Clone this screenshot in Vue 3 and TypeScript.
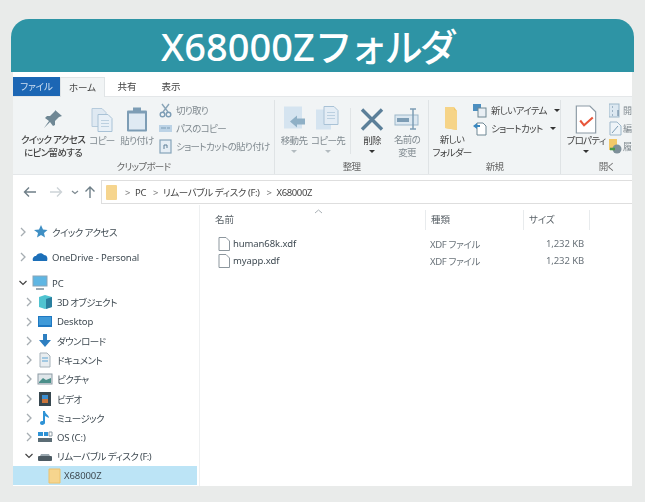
<script setup lang="ts">
type TreeRow = { label: string; icon: string; depth: number; open?: boolean; noArrow?: boolean; selected?: boolean; gap?: boolean }

const tabs = ['ホーム', '共有', '表示']

const tree: TreeRow[] = [
  { label: 'クイック アクセス', icon: 'star', depth: 0, gap: true },
  { label: 'OneDrive - Personal', icon: 'cloud', depth: 0, gap: true },
  { label: 'PC', icon: 'pc', depth: 0, open: true },
  { label: '3D オブジェクト', icon: 'cube', depth: 1 },
  { label: 'Desktop', icon: 'desktop', depth: 1 },
  { label: 'ダウンロード', icon: 'download', depth: 1 },
  { label: 'ドキュメント', icon: 'doc', depth: 1 },
  { label: 'ピクチャ', icon: 'picture', depth: 1 },
  { label: 'ビデオ', icon: 'video', depth: 1 },
  { label: 'ミュージック', icon: 'music', depth: 1 },
  { label: 'OS (C:)', icon: 'os', depth: 1 },
  { label: 'リムーバブル ディスク (F:)', icon: 'drive', depth: 1, open: true },
  { label: 'X68000Z', icon: 'folder', depth: 2, noArrow: true, selected: true },
]

const files = [
  { name: 'human68k.xdf', type: 'XDF ファイル', size: '1,232 KB' },
  { name: 'myapp.xdf', type: 'XDF ファイル', size: '1,232 KB' },
]

const isJapanese = (text: string): boolean => /[^\x00-\x7f]/.test(text)
</script>

<template>
  <div class="page">
    <div class="card">
      <h1 class="title">X68000Z<span class="title-kana">フォルダ</span></h1>
      <div class="explorer">
        <div class="tabs">
          <div class="tab tab-file">ファイル</div>
          <div v-for="(t, i) in tabs" :key="t" class="tab" :class="{ 'tab-active': i === 0 }">{{ t }}</div>
        </div>

        <div class="ribbon">
          <section class="group group-clip">
            <div class="group-body">
              <div class="big big-pin">
                <svg width="26" height="26" viewBox="0 0 26 26"><path d="M15 4l7 6-3 1-4 4 0 4-2 1-3-4-6 6 5-7-4-3 2-2h3l5-5z" fill="#6f8794" /></svg>
                <span>クイック アクセス<br />にピン留めする</span>
              </div>
              <div class="big big-copy off">
                <svg width="26" height="26" viewBox="0 0 26 26"><path d="M3 2h10l4 4v14H3z" fill="#dfe9f2" stroke="#b6cbdc" /><path d="M9 8h10l4 4v13H9z" fill="#e8f0f7" stroke="#a9c2d6" /><path d="M12 14h8M12 17h8M12 20h8" stroke="#bcd0e0" /></svg>
                <span>コピー</span>
              </div>
              <div class="big big-paste off">
                <svg width="26" height="26" viewBox="0 0 26 26"><rect x="3" y="4" width="20" height="21" rx="1" fill="#7d9db5" /><rect x="5" y="7" width="16" height="16" fill="#dfeaf3" /><rect x="9" y="1" width="8" height="5" fill="#7d9db5" /></svg>
                <span>貼り付け</span>
              </div>
              <div class="small-list off">
                <div class="small">
                  <svg width="13" height="15" viewBox="0 0 13 15"><path d="M3 1l6 8M10 1L4 9" stroke="#8aa5b8" stroke-width="1.4" fill="none" /><circle cx="3.5" cy="11.500" r="2.300" fill="none" stroke="#7d9db5" stroke-width="1.400" /><circle cx="9.500" cy="11.500" r="2.300" fill="none" stroke="#7d9db5" stroke-width="1.400" /></svg>
                  <span>切り取り</span>
                </div>
                <div class="small">
                  <svg width="13" height="15" viewBox="0 0 13 15"><rect x="0" y="4" width="13" height="7" fill="#bcd3e6" /><path d="M2 7h5M8 7h3" stroke="#7d9db5" /></svg>
                  <span>パスのコピー</span>
                </div>
                <div class="small">
                  <svg width="13" height="15" viewBox="0 0 13 15"><rect x="1" y="1" width="11" height="13" fill="#e6eef5" stroke="#86a4ba" stroke-width="1.200" /><path d="M5 10V6h3v3" stroke="#5f7f97" fill="none" /></svg>
                  <span>ショートカットの貼り付け</span>
                </div>
              </div>
            </div>
            <div class="group-label">クリップボード</div>
          </section>

          <section class="group group-org">
            <div class="group-body">
              <div class="big big-move off">
                <svg width="26" height="26" viewBox="0 0 26 26"><rect x="3" y="0" width="18" height="22" fill="#d5e4f0" /><path d="M9 15l7-6v3h8v6h-8v3z" fill="#8fb0c6" /></svg>
                <span>移動先</span>
                <i class="caret caret-off"></i>
              </div>
              <div class="big big-copyto off">
                <svg width="26" height="26" viewBox="0 0 26 26"><path d="M1 3h15v20H1z" fill="#d5e4f0" /><path d="M9 0h10l4 4v14H9z" fill="#e4edf5" stroke="#a9c2d6" /><path d="M12 6h8M12 9h8M12 12h8" stroke="#bcd0e0" /></svg>
                <span>コピー先</span>
                <i class="caret caret-off"></i>
              </div>
              <div class="vsep"></div>
              <div class="big big-del">
                <svg width="24" height="24" viewBox="0 0 24 24"><path d="M2 2l20 20M22 2L2 22" stroke="#5b7f99" stroke-width="3.400" fill="none" /></svg>
                <span>削除</span>
                <i class="caret"></i>
              </div>
              <div class="big big-rename off">
                <svg width="26" height="26" viewBox="0 0 26 26"><rect x="1" y="9" width="23" height="10" fill="#dce8f1" stroke="#9db7ca" /><rect x="3" y="12" width="12" height="4" fill="#7d9db5" /><path d="M16 3h6M19 3v20M16 23h6" stroke="#7d9db5" stroke-width="1.500" fill="none" /></svg>
                <span>名前の<br />変更</span>
              </div>
            </div>
            <div class="group-label">整理</div>
          </section>

          <section class="group group-new">
            <div class="group-body">
              <div class="big big-folder">
                <svg width="26" height="26" viewBox="0 0 26 26"><path d="M6 1h9l3 4v19l-12-2z" fill="#f2c868" /><path d="M6 1h9v3l3 1v19l-12-2z" fill="#f6d488" /></svg>
                <span>新しい<br />フォルダー</span>
              </div>
              <div class="small-list small-new">
                <div class="small">
                  <svg width="14" height="15" viewBox="0 0 14 15"><rect x="0" y="1" width="8" height="7" fill="#4d8fc0" /><rect x="5" y="5" width="8" height="9" fill="#e9eff4" stroke="#6f8794" /></svg>
                  <span>新しいアイテム</span><i class="caret caret-inline"></i>
                </div>
                <div class="small">
                  <svg width="14" height="15" viewBox="0 0 14 15"><path d="M4 2h6l3 3v9H4z" fill="#fff" stroke="#6f8794" /><path d="M0 5l4-3v2h3v2H4v2z" fill="#3a87bf" /></svg>
                  <span>ショートカット</span><i class="caret caret-inline"></i>
                </div>
              </div>
            </div>
            <div class="group-label">新規</div>
          </section>

          <section class="group group-open">
            <div class="group-body">
              <div class="big big-prop">
                <svg width="26" height="30" viewBox="0 0 26 30"><path d="M3 1h14l6 6v22H3z" fill="#fff" stroke="#8b9aa5" stroke-width="1.200" /><path d="M7 16l4 5 9-8" stroke="#e8563a" stroke-width="2.200" fill="none" /></svg>
                <span>プロパティ</span>
                <i class="caret"></i>
              </div>
              <div class="small-list small-open off">
                <div class="small">
                  <svg width="13" height="15" viewBox="0 0 13 15"><rect x="0" y="1" width="10" height="13" fill="#dce8f1" stroke="#9db7ca" /><path d="M3 4h1M3 8h1M3 12h1M9 7v6" stroke="#5f7f97" /></svg>
                  <span>開</span>
                </div>
                <div class="small">
                  <svg width="13" height="15" viewBox="0 0 13 15"><path d="M1 1h7l4 4v9H1z" fill="#eef4f8" stroke="#9db7ca" /><path d="M3 12l6-7" stroke="#7d9db5" /></svg>
                  <span>編</span>
                </div>
                <div class="small">
                  <svg width="13" height="15" viewBox="0 0 13 15"><rect x="0" y="0" width="8" height="11" fill="#f2c868" /><circle cx="8" cy="10" r="4.500" fill="#7d8f99" /><path d="M1 10h5" stroke="#4c9a47" stroke-width="2.500" /></svg>
                  <span>履</span>
                </div>
              </div>
            </div>
            <div class="group-label">開く</div>
          </section>
        </div>

        <div class="nav">
          <div class="nav-buttons">
            <svg width="14" height="12" viewBox="0 0 14 12"><path d="M13 6H2M6 1.500L1.500 6 6 10.500" stroke="#6f7f88" stroke-width="1.400" fill="none" /></svg>
            <svg width="14" height="12" viewBox="0 0 14 12"><path d="M1 6h11M8 1.500L12.500 6 8 10.500" stroke="#cdd3d7" stroke-width="1.400" fill="none" /></svg>
            <svg class="nav-down" width="8" height="12" viewBox="0 0 8 12"><path d="M1 5l3 2.500L7 5" stroke="#7c888f" stroke-width="1.200" fill="none" /></svg>
            <svg class="nav-up" width="12" height="14" viewBox="0 0 12 14"><path d="M6 13V2M1.500 6.500L6 2l4.500 4.500" stroke="#6f7f88" stroke-width="1.400" fill="none" /></svg>
          </div>
          <div class="address">
            <svg width="12" height="15" viewBox="0 0 12 15"><rect x="0" y="0" width="11" height="15" rx="1" fill="#f6d58e" /></svg>
            <span class="sep">&gt;</span><span>PC</span>
            <span class="sep">&gt;</span><span>リムーバブル ディスク (F:)</span>
            <span class="sep">&gt;</span><span>X68000Z</span>
          </div>
        </div>

        <div class="main">
          <aside class="tree">
            <div
              v-for="row in tree"
              :key="row.label"
              class="tree-row"
              :class="[`depth-${row.depth}`, { selected: row.selected, spaced: row.gap, tight: isJapanese(row.label) }]"
            >
              <svg v-if="!row.noArrow" class="arrow" width="8" height="10" viewBox="0 0 8 10">
                <path v-if="row.open" d="M0.500 3l3.500 3.500L7.500 3" stroke="#444" stroke-width="1.200" fill="none" />
                <path v-else d="M2 1l4 4-4 4" stroke="#a6adb2" stroke-width="1.300" fill="none" />
              </svg>
              <svg class="tree-icon" width="16" height="16" viewBox="0 0 16 16">
                <path v-if="row.icon === 'star'" d="M9 1l2 4.500 4.500.5-3.500 3 1 4.500-4-2.500L5 13.500l1-4.500-4-3 5-.5z" fill="#3f8fc4" />
                <path v-else-if="row.icon === 'cloud'" d="M1 12c-1-3 1-5 3-5 1-3 6-4 8-1 3 0 4 3 3 6z" fill="#1c6fb8" />
                <g v-else-if="row.icon === 'pc'">
                  <rect x="1" y="1" width="14" height="10" fill="#5fb6e3" stroke="#8aa5b8" />
                  <path d="M4 14h8" stroke="#9aa9b3" stroke-width="2" />
                </g>
                <g v-else-if="row.icon === 'cube'">
                  <path d="M2 3l6-2 7 2v10l-7 2-6-2z" fill="#4fc3d0" />
                  <path d="M9 5l6-2v10l-6 2z" fill="#2a7f9f" />
                </g>
                <g v-else-if="row.icon === 'desktop'">
                  <rect x="1" y="2" width="14" height="11" fill="#1f78c1" />
                  <rect x="2" y="3" width="12" height="8" fill="#3f9ad8" />
                </g>
                <path v-else-if="row.icon === 'download'" d="M6 1h4v6h4l-6 7-6-7h4z" fill="#2e7fc1" />
                <g v-else-if="row.icon === 'doc'">
                  <path d="M3 1h7l3 3v11H3z" fill="#e8edf0" stroke="#a6b2ba" />
                  <path d="M5 6h6M5 9h6" stroke="#5aa3d3" />
                </g>
                <g v-else-if="row.icon === 'picture'">
                  <rect x="1" y="3" width="14" height="10" fill="#dfe6ea" stroke="#8c9aa3" />
                  <path d="M2 11l4-4 3 2 5-2v5H2z" fill="#4b8f8a" />
                </g>
                <g v-else-if="row.icon === 'video'">
                  <rect x="2" y="1" width="12" height="14" fill="#37474f" />
                  <rect x="5" y="4" width="6" height="4" fill="#3b8ed0" />
                  <rect x="5" y="8" width="6" height="4" fill="#c9743b" />
                </g>
                <path v-else-if="row.icon === 'music'" d="M6 1h2c0 3 4 4 4 7l-4-2v7c0 2-5 3-5 0 0-2 2-2 3-2z" fill="#2f93d6" />
                <g v-else-if="row.icon === 'os'">
                  <path d="M1 3h5v4H1zM7 3h4v4H7z" fill="#2f93d6" />
                  <rect x="1" y="9" width="14" height="4" fill="#5c6d76" />
                  <path d="M12 7V3h3v4z" fill="none" stroke="#8c9aa3" />
                </g>
                <g v-else-if="row.icon === 'drive'">
                  <rect x="1" y="8" width="14" height="5" rx="1" fill="#4d5b63" />
                  <path d="M4 6h8l1 2H3z" fill="#9aa7af" />
                </g>
                <path v-else d="M2 1h11v14H2z" fill="#f6d58e" stroke="#eec26d" />
              </svg>
              <span>{{ row.label }}</span>
            </div>
          </aside>

          <div class="list">
            <div class="list-head">
              <svg class="sort" width="9" height="5" viewBox="0 0 9 5"><path d="M1 4l3.500-3L8 4" stroke="#a9b0b5" fill="none" /></svg>
              <div class="col col-name">名前</div>
              <div class="col col-type">種類</div>
              <div class="col col-size">サイズ</div>
            </div>
            <div v-for="f in files" :key="f.name" class="file">
              <div class="cell-name">
                <svg width="12" height="14" viewBox="0 0 12 14"><path d="M1 .500h7l3.500 3.500v9.500H1z" fill="#fff" stroke="#8d979e" /></svg>
                <span>{{ f.name }}</span>
              </div>
              <div class="cell-type">{{ f.type }}</div>
              <div class="cell-size">{{ f.size }}</div>
            </div>
          </div>
        </div>
      </div>
    </div>
  </div>
</template>

<style scoped>
.page {
  width: 645px;
  height: 502px;
  box-sizing: border-box;
  padding: 19px 11px 16px;
  background: #e9ebea;
  font-family: "Noto Sans", "Noto Sans CJK JP", sans-serif;
  overflow: hidden;
}
.card {
  width: 623px;
  height: 467px;
  display: flex;
  flex-direction: column;
}
.title {
  margin: 0;
  height: 53px;
  flex: none;
  box-sizing: border-box;
  padding-left: 150px;
  border-radius: 18px 18px 0 0;
  background: #2e94a5;
  color: #fff;
  font-size: 38px;
  font-weight: 500;
  line-height: 55px;
  white-space: nowrap;
}
.title-kana {
  letter-spacing: -3px;
}
.explorer {
  flex: 1;
  min-height: 0;
  margin: 0 2px;
  background: #fff;
  overflow: hidden;
  color: #444;
  font-family: "Noto Sans", "Noto Sans CJK JP", sans-serif;
  font-size: 9.500px;
  font-feature-settings: "palt";
  letter-spacing: -0.100px;
  filter: blur(0.450px);
}

.tabs {
  height: 25px;
  display: flex;
  align-items: flex-end;
  border-bottom: 1px solid #e4e7e9;
  box-sizing: border-box;
}
.tab {
  width: 44px;
  height: 19px;
  line-height: 19px;
  text-align: center;
  color: #444;
}
.tab-file {
  width: 47px;
  height: 19px;
  background: #1c66b4;
  color: #cfe0f2;
}
.tab-active {
  height: 20px;
  margin-bottom: -1px;
  width: 45px;
  background: #f1f4f5;
  border: 1px solid #e0e4e6;
  border-bottom: none;
  box-sizing: border-box;
}

.ribbon {
  height: 78px;
  display: flex;
  background: #f1f4f5;
  border-bottom: 1px solid #e4e7e9;
  box-sizing: border-box;
  overflow: hidden;
  letter-spacing: -0.650px;
}
.group {
  flex: none;
  box-sizing: border-box;
  display: flex;
  flex-direction: column;
  border-right: 1px solid #dfe3e5;
  margin: 3px 0 0;
}
.group-clip { width: 262px; }
.group-org { width: 154px; }
.group-new { width: 132px; }
.group-open { width: 72px; border-right: none; }
.group-open .group-label { padding-left: 18px; }
.group-body {
  flex: 1;
  display: flex;
  min-height: 0;
}
.group-label {
  height: 15px;
  line-height: 15px;
  text-align: center;
  color: #666;
}
.big {
  flex: none;
  display: flex;
  flex-direction: column;
  align-items: center;
  text-align: center;
  line-height: 12.500px;
  position: relative;
}
.big svg {
  height: 29px;
  margin-top: 5px;
  margin-bottom: 1px;
}
.big span {
  white-space: nowrap;
}
.big-pin { width: 68px; margin-left: 6px; font-weight: 500; }
.big-copy { width: 26px; margin-left: 2px; }
.big-paste { width: 36px; margin-left: 4px; }
.big-move { width: 30px; margin-left: 4px; }
.big-copyto { width: 34px; margin-left: 2px; }
.big-del { width: 26px; margin-left: 8px; }
.big-rename { width: 32px; margin-left: 6px; }
.big-folder { width: 38px; margin-left: 4px; }
.big-prop { width: 46px; margin-left: 2px; }
.off { color: #808a90; }
.vsep {
  width: 1px;
  height: 46px;
  margin: 8px 0 0 5px;
  background: #e0e4e6;
}
.caret {
  width: 0;
  height: 0;
  margin-top: 2px;
  border: 3px solid transparent;
  border-top-color: #333;
  border-bottom: none;
}
.caret-off { border-top-color: #b3bbc0; }
.caret-inline { margin: 0 0 0 3px; }
.small-list {
  display: flex;
  flex-direction: column;
  gap: 0;
  margin-left: 4px;
  padding-top: 1px;
}
.small-new { margin-left: 2px; }
.small-open { margin-left: 0; }
.small-open .small { gap: 1px; font-size: 9px; }
.small {
  height: 18px;
  display: flex;
  align-items: center;
  gap: 4px;
  white-space: nowrap;
}

.nav {
  height: 30px;
  display: flex;
  align-items: center;
  padding: 5px 0 1px;
  box-sizing: border-box;
}
.nav-buttons {
  width: 88px;
  flex: none;
  display: flex;
  align-items: center;
  gap: 12px;
  padding-left: 10px;
  box-sizing: border-box;
}
.nav-down { margin-left: -4px; }
.nav-up { margin-left: -7px; }
.address {
  flex: 1;
  height: 24px;
  display: flex;
  align-items: center;
  gap: 5px;
  box-sizing: border-box;
  padding-left: 4px;
  border: 1px solid #dedede;
  border-right: none;
  letter-spacing: -0.400px;
}
.sep {
  color: #777;
  margin-left: 2px;
}

.main {
  display: flex;
  height: 281px;
}
.tree {
  width: 184px;
  flex: none;
  padding-top: 17px;
  box-sizing: border-box;
}
.tree-row {
  height: 19.250px;
  display: flex;
  align-items: center;
  gap: 4px;
  white-space: nowrap;
  color: #3f4a52;
}
.tree-row.tight {
  letter-spacing: -0.550px;
}
.tree-row.spaced {
  margin-bottom: 6.500px;
}
.arrow {
  flex: none;
}
.depth-0 { padding-left: 6px; }
.depth-1 { padding-left: 12px; }
.depth-2 { padding-left: 34px; }
.depth-0 .tree-icon { margin-left: 1px; }
.depth-2 .tree-icon { margin-right: -3px; }
.selected {
  background: #bce4f6;
}
.list {
  flex: 1;
  margin-left: 2px;
  border-left: 1px solid #eef0f1;
  position: relative;
}
.list-head {
  height: 28px;
  display: flex;
  align-items: center;
  padding-top: 2px;
  box-sizing: border-box;
  color: #5a6268;
}
.sort {
  position: absolute;
  left: 114px;
  top: 4px;
}
.col {
  height: 20px;
  line-height: 20px;
  box-sizing: border-box;
  flex: none;
  border-right: 1px solid #e8ebed;
}
.col-name { width: 226px; padding-left: 15px; }
.col-type { width: 98px; padding-left: 5px; }
.col-size { width: 66px; padding-left: 5px; }
.file {
  height: 17px;
  display: flex;
  align-items: center;
  color: #6a737a;
  position: relative;
  top: 2px;
}
.file:first-of-type { margin-top: 2px; }
.cell-name {
  width: 226px;
  display: flex;
  align-items: center;
  gap: 3px;
  padding-left: 18px;
  box-sizing: border-box;
  color: #3f4a52;
}
.cell-type {
  width: 98px;
  padding-left: 4px;
  box-sizing: border-box;
  letter-spacing: -0.350px;
}
.cell-size {
  width: 60px;
  text-align: right;
}
</style>
